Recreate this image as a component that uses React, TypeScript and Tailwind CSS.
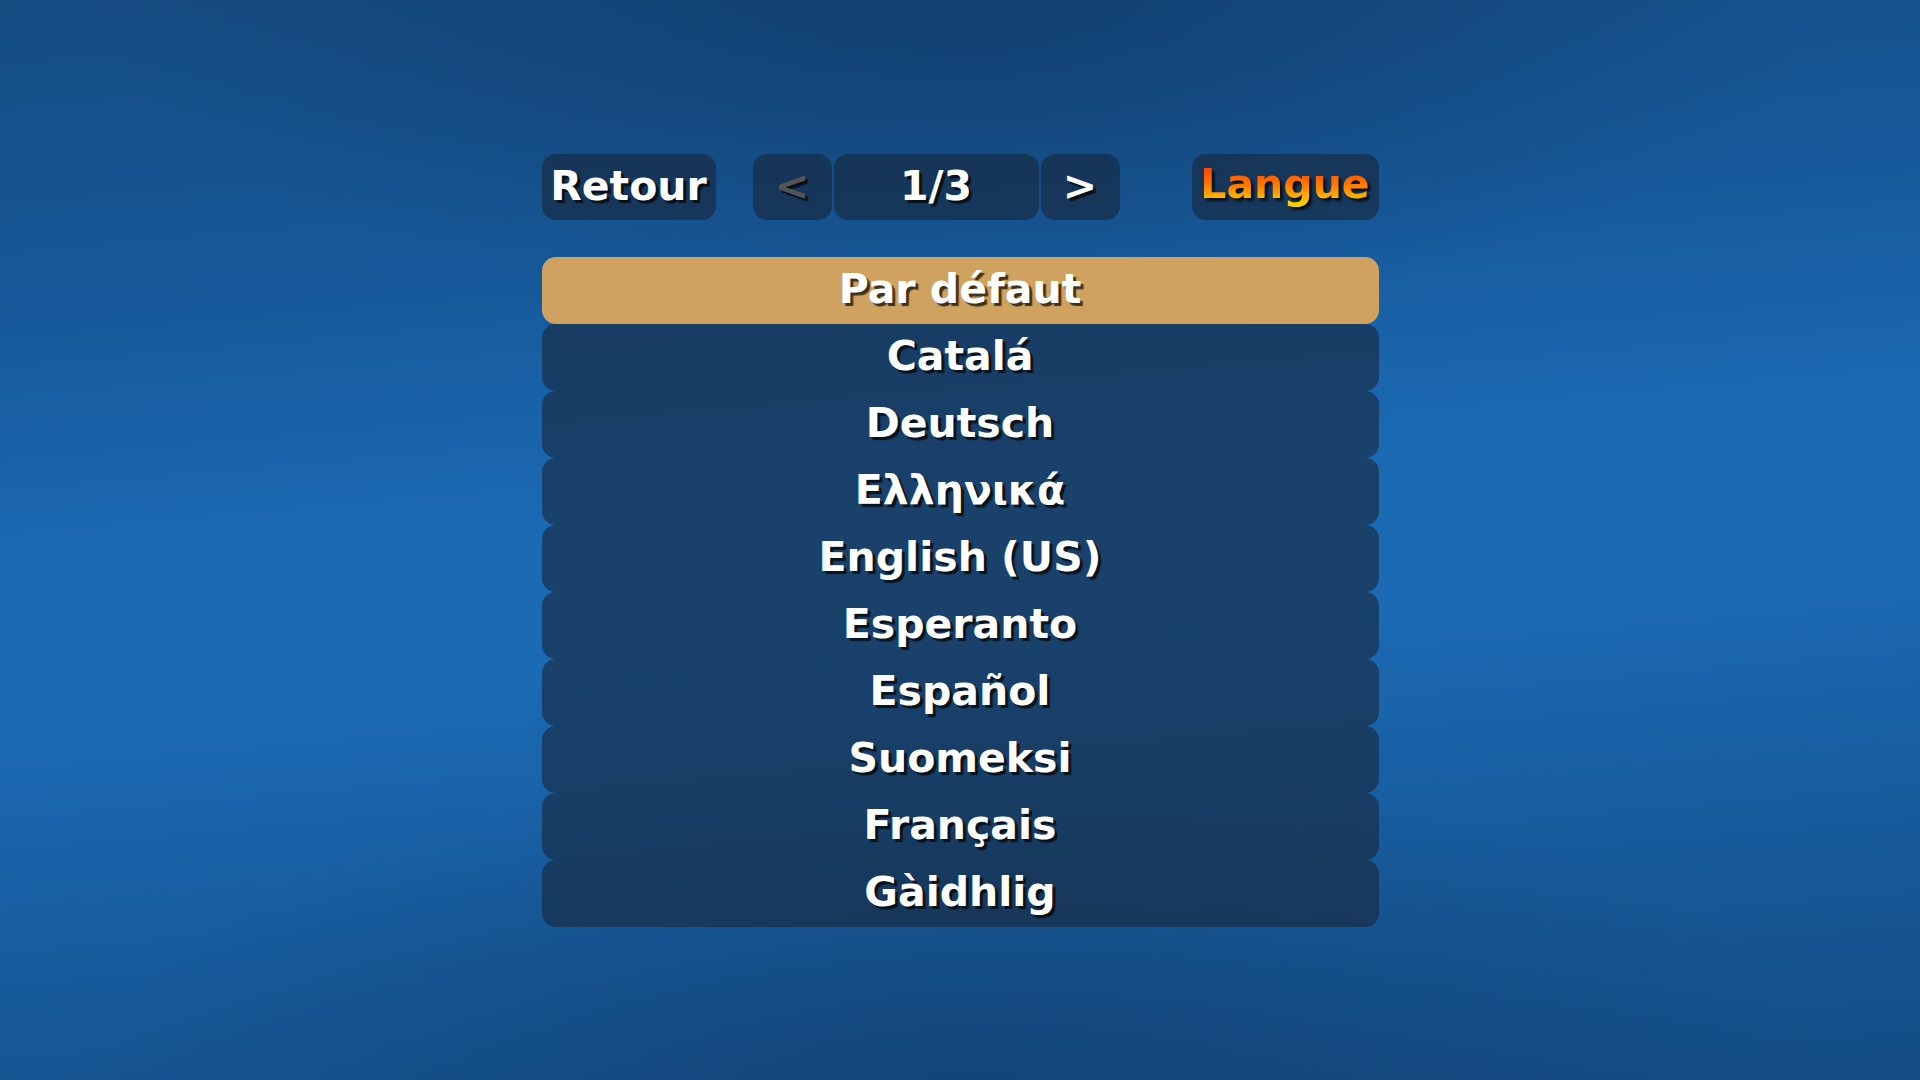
import React from "react";

const langs = [
  "Par défaut",
  "Catalá",
  "Deutsch",
  "Ελληνικά",
  "English (US)",
  "Esperanto",
  "Español",
  "Suomeksi",
  "Français",
  "Gàidhlig",
];

const shadow = "[text-shadow:3px_3px_1px_rgba(0,0,0,0.7)]";

export default function App() {
  return (
    <div className="min-h-screen w-full font-['DejaVu_Sans','Noto_Sans',sans-serif] font-bold text-white [background-image:radial-gradient(ellipse_45%_30%_at_50%_0%,rgba(14,50,90,0.55),rgba(14,50,90,0)),radial-gradient(ellipse_45%_30%_at_50%_100%,rgba(14,50,90,0.4),rgba(14,50,90,0)),linear-gradient(175deg,#154c82_0%,#17599a_25%,#1b69b2_45%,#1b6ab4_58%,#175a9a_80%,#144c84_100%)]">
      <div className="flex flex-col items-center pt-[154px]">
        <div className="w-[837px]">
          {/* header */}
          <div className="flex h-[66px] items-stretch">
            <div
              className={`flex w-[174px] items-center justify-center rounded-[14px] bg-[rgba(24,40,62,0.64)] pb-[2px] text-[41px] leading-none ${shadow}`}
            >
              Retour
            </div>
            <div
              className={`ml-[37px] flex w-[79px] items-center justify-center rounded-[14px] bg-[rgba(24,40,62,0.64)] pb-[2px] text-[41px] leading-none text-[#555555] ${shadow}`}
            >
              &lt;
            </div>
            <div
              className={`ml-[2px] flex w-[205px] items-center justify-center rounded-[14px] bg-[rgba(24,40,62,0.64)] pb-[2px] text-[41px] leading-none ${shadow}`}
            >
              1/3
            </div>
            <div
              className={`ml-[2px] flex w-[79px] items-center justify-center rounded-[14px] bg-[rgba(24,40,62,0.64)] pb-[2px] text-[41px] leading-none ${shadow}`}
            >
              &gt;
            </div>
            <div className="ml-auto flex w-[187px] items-center justify-center rounded-[14px] bg-[rgba(24,40,62,0.64)]">
              <span className="inline-block bg-[linear-gradient(180deg,#ff3000_0%,#ff7a00_45%,#ffc800_78%,#f6f000_100%)] bg-clip-text pb-[8px] pt-[2px] text-[41px] leading-none text-transparent [filter:drop-shadow(3px_3px_1px_rgba(0,0,0,0.7))]">
                Langue
              </span>
            </div>
          </div>

          {/* list */}
          <div className="mt-[37px] flex flex-col">
            {langs.map((l, i) => (
              <div
                key={l}
                className={`flex h-[67px] items-center justify-center rounded-[14px] pb-[2px] text-[41px] leading-none ${shadow} ${
                  i === 0 ? "bg-[#cfa35f]" : "bg-[rgba(24,40,62,0.62)]"
                }`}
              >
                {l}
              </div>
            ))}
          </div>
        </div>
      </div>
    </div>
  );
}
